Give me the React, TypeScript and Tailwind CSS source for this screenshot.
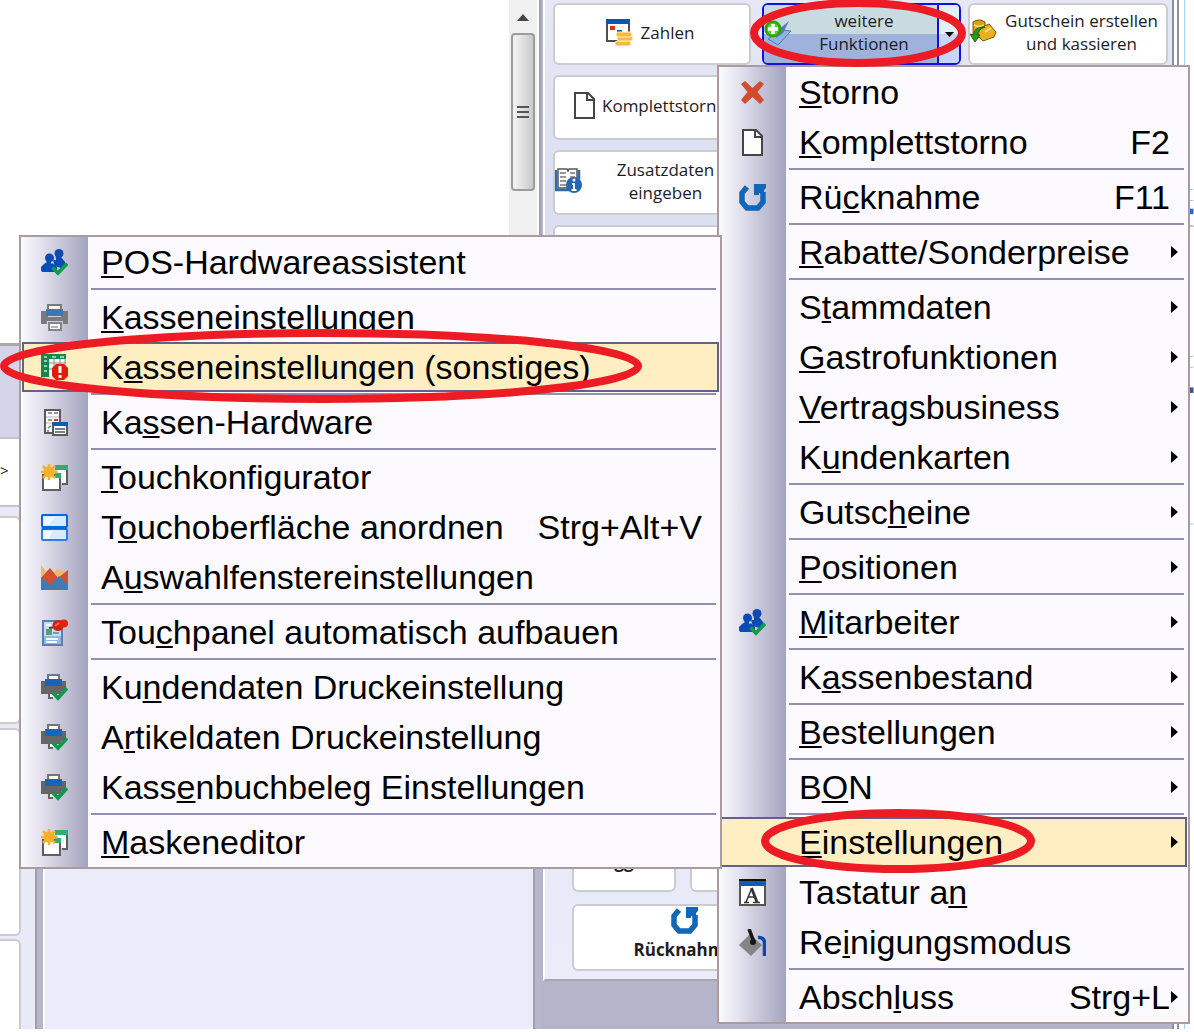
import React from 'react';

type IconName =
  | 'cross'
  | 'page'
  | 'undo'
  | 'people'
  | 'printer'
  | 'table'
  | 'hardware'
  | 'newWindow'
  | 'split'
  | 'chart'
  | 'pinned'
  | 'printerCheck'
  | 'keyboard'
  | 'bucket'
  | 'pay'
  | 'book'
  | 'more'
  | 'coins';

interface MenuEntry {
  // the character after & is underlined
  label: string;
  icon?: IconName;
  shortcut?: string;
  submenu?: boolean;
  active?: boolean;
}

const MAIN_MENU: MenuEntry[][] = [
  [
    { label: '&Storno', icon: 'cross' },
    { label: '&Komplettstorno', icon: 'page', shortcut: 'F2' },
  ],
  [{ label: 'Rü&cknahme', icon: 'undo', shortcut: 'F11' }],
  [{ label: '&Rabatte/Sonderpreise', submenu: true }],
  [
    { label: 'S&tammdaten', submenu: true },
    { label: '&Gastrofunktionen', submenu: true },
    { label: '&Vertragsbusiness', submenu: true },
    { label: 'K&undenkarten', submenu: true },
  ],
  [{ label: 'Gutsc&heine', submenu: true }],
  [{ label: '&Positionen', submenu: true }],
  [{ label: '&Mitarbeiter', icon: 'people', submenu: true }],
  [{ label: 'K&assenbestand', submenu: true }],
  [{ label: '&Bestellungen', submenu: true }],
  [{ label: 'B&ON', submenu: true }],
  [
    { label: '&Einstellungen', submenu: true, active: true },
    { label: 'Tastatur a&n', icon: 'keyboard' },
    { label: 'Re&inigungsmodus', icon: 'bucket' },
  ],
  [{ label: 'Absch&luss', shortcut: 'Strg+L', submenu: true }],
];

const SETTINGS_MENU: MenuEntry[][] = [
  [{ label: '&POS-Hardwareassistent', icon: 'people' }],
  [
    { label: '&Kasseneinstellungen', icon: 'printer' },
    { label: 'K&asseneinstellungen (sonstiges)', icon: 'table', active: true },
  ],
  [{ label: 'Ka&ssen-Hardware', icon: 'hardware' }],
  [
    { label: '&Touchkonfigurator', icon: 'newWindow' },
    { label: 'T&ouchoberfläche anordnen', icon: 'split', shortcut: 'Strg+Alt+V' },
    { label: 'A&uswahlfenstereinstellungen', icon: 'chart' },
  ],
  [{ label: 'Tou&chpanel automatisch aufbauen', icon: 'pinned' }],
  [
    { label: 'Ku&ndendaten Druckeinstellung', icon: 'printerCheck' },
    { label: 'A&rtikeldaten Druckeinstellung', icon: 'printerCheck' },
    { label: 'Kass&enbuchbeleg Einstellungen', icon: 'printerCheck' },
  ],
  [{ label: '&Maskeneditor', icon: 'newWindow' }],
];

const ICONS: Record<IconName, React.ReactNode> = {
  cross: <path d="M2 5 L6 2 L13.500 9 L21 2 L25 5 L18.500 13 L25 21 L21 25 L13.500 18 L6 25 L2 21 L8.500 13 Z" fill="#d24b30" />,
  page: (
    <>
      <path d="M4 1 H17 L23 7 V26 H4 Z" fill="#fdfdfd" stroke="#454545" strokeWidth="2" />
      <path d="M16 1 V8 H23" fill="none" stroke="#454545" strokeWidth="2" />
    </>
  ),
  undo: (
    <>
      <path d="M8 3 L3 9 V18 L8 24 H19 L24 18 V8" fill="none" stroke="#1266b8" strokeWidth="5.500" />
      <path d="M15 0 H27 V4 L25 6 V10 L20 9 V11 H15 Z" fill="#1266b8" />
    </>
  ),
  people: (
    <>
      <g fill="#0a4bb5">
        <circle cx="18" cy="4.500" r="4.500" />
        <path d="M15 8 H20 L24 13 V17 L20 19 L14 17 L12 12 Z" />
        <circle cx="8.500" cy="9" r="4.500" />
        <path d="M6 13 H11 L16 18 V23 H1 L0 21 V18 L3 15 Z" />
      </g>
      <path d="M10 13.500 H12.500 M13 10 H15" stroke="#c0d2ee" strokeWidth="2" />
      <path d="M11.500 18.500 L17 24 L26 14.500" fill="none" stroke="#0f9b4e" strokeWidth="3.800" />
    </>
  ),
  printer: (
    <>
      <path d="M0 7 H4 V13 H23 V7 H27 V20 H22 V17 H6 V20 H0 Z M3 7 H7 V13 H3 Z M20 7 H24 V13 H20 Z" fill="#7b7b7b" />
      <path d="M7 1 H20 V8 H7 Z" fill="#f7f7f7" stroke="#7a7a7a" strokeWidth="2" />
      <rect x="5" y="5" width="17" height="7" fill="#3878b8" />
      <path d="M8 19 H20 V26 H8 Z" fill="#fff" stroke="#858585" strokeWidth="2" />
      <path d="M10 23 H17" stroke="#8fbbe0" strokeWidth="2" />
    </>
  ),
  table: (
    <>
      <rect x="1" y="0" width="24" height="23" fill="#f6faf6" />
      <path d="M0 0 H25 V5 H8 V23 H0 Z" fill="#16884f" />
      <path d="M3 7 H6 M3 12 H6 M3 17 H6 M3 3 H6 M11 3 H15 M19 3 H23" stroke="#8fd3ac" strokeWidth="2" />
      <path d="M8 9 H25 M8 15 H25 M13 5 V22 M19 5 V22 M24 5 V12" stroke="#8d8d8d" strokeWidth="1" />
      <path d="M15 10 H23 L27 14 V22 L23 26 H15 L11 22 V14 Z" fill="#e01e0c" />
      <path d="M19 12 V19 M19 21 V24" stroke="#fff" strokeWidth="3" />
    </>
  ),
  hardware: (
    <>
      <path d="M4 1 H19 V24 H4 Z" fill="#fcfcfc" stroke="#5a5a5a" strokeWidth="2" />
      <path d="M7 4 H11 M13 4 H17 M7 11 H11 M7 19 L10 17 M6 22 H8" stroke="#777" strokeWidth="1.500" />
      <path d="M5 8 H18 M5 14 H12" stroke="#b5b5b5" strokeWidth="1" />
      <path d="M13 11 H17" stroke="#d33" strokeWidth="2" />
      <path d="M12 14 H26 V26 H12 Z" fill="#fff" stroke="#5a5a5a" strokeWidth="2" />
      <rect x="11" y="13" width="16" height="4" fill="#0d5cb5" />
      <path d="M14 20 H24 M14 23 H24" stroke="#555" strokeWidth="1.500" />
    </>
  ),
  newWindow: (
    <>
      <path d="M15 3 H26 V20 H21" fill="#fff" stroke="#5f5f5f" strokeWidth="2" />
      <rect x="14" y="1" width="13" height="5" fill="#2fac78" />
      <path d="M2 11 H19 V26 H2 Z" fill="#fff" stroke="#5f5f5f" strokeWidth="2" />
      <rect x="14" y="9" width="6" height="5" fill="#2fac78" />
      <path d="M8 0 V16 M0 8 H16 M2 2 L14 14 M14 2 L2 14" stroke="#f9b02c" strokeWidth="2.600" />
      <circle cx="8" cy="8" r="5.500" fill="#f9b02c" />
    </>
  ),
  split: (
    <>
      <rect x="1" y="1" width="25" height="12" rx="1" fill="#d4ecfd" stroke="#0868d8" strokeWidth="2" />
      <rect x="1" y="15" width="25" height="11" rx="1" fill="#d4ecfd" stroke="#2c7fe0" strokeWidth="2" />
      <path d="M2 3 H14 L8 11 H2 Z M2 17 H12 L8 25 H2 Z" fill="#eff8ff" />
      <path d="M1 14 H26" stroke="#0868d8" strokeWidth="3" />
    </>
  ),
  chart: (
    <>
      <path d="M0 1 L5 7 L9 5 L13 8 L18 5 L22 8 L27 6 V18 H0 Z" fill="#edb868" />
      <path d="M0 14 L9 4 L17 14 L27 6 V22 H0 Z" fill="#d04e32" />
      <path d="M0 13 L9 21 L18 12 L27 21 V26 H0 Z" fill="#3f7cb5" />
    </>
  ),
  pinned: (
    <>
      <path d="M2 2 H21 V26 H2 Z" fill="#c3def3" stroke="#5f7da8" strokeWidth="2" />
      <path d="M3 17 H20 V25 H3 Z" fill="#85bdea" />
      <path d="M5 6 H10 M5 20 H17 M5 23 H16" stroke="#f8fcff" strokeWidth="2" />
      <rect x="5" y="10" width="6" height="6" fill="#5b9b78" />
      <path d="M12 14 H18" stroke="#8398b0" strokeWidth="2" />
      <path d="M8 9 L15 8" stroke="#444" strokeWidth="2" />
      <circle cx="17" cy="6.500" r="5.500" fill="#d5200c" />
      <circle cx="23" cy="4.500" r="4" fill="#e8210e" />
      <path d="M14 7 L18 4" stroke="#ff6b4d" strokeWidth="2" />
    </>
  ),
  printerCheck: (
    <>
      <path d="M0 7 H5 V12 H21 V7 H25 V17 H20 V20 H12 V25 H7 V20 H0 Z" fill="#666" />
      <path d="M7 1 H18 V8 H7 Z" fill="#fff" stroke="#757575" strokeWidth="2" />
      <path d="M4 5 H21 V12 H4 Z" fill="#1566b8" />
      <path d="M9 20 H13 V23 H9 Z" fill="#fff" />
      <path d="M11.500 18.500 L17 24 L26 14" fill="none" stroke="#0d984c" strokeWidth="3.800" />
    </>
  ),
  keyboard: (
    <>
      <rect x="1" y="1" width="25" height="25" fill="#fdfdfd" stroke="#555" strokeWidth="2" />
      <rect x="1" y="1" width="25" height="6" fill="#0e5cb4" />
      <path d="M0 1 H27" stroke="#111" strokeWidth="2" />
      <path d="M7 23 L12.500 10 M9 18 H16 M5 23.500 H10 M14 23.500 H21" fill="none" stroke="#333" strokeWidth="1.500" />
      <path d="M12.500 9 L18 23" stroke="#333" strokeWidth="2.800" />
    </>
  ),
  bucket: (
    <>
      <path d="M0 16 L11 5 L23 16 L12 27 Z" fill="#858585" />
      <path d="M10 0 L15 13" stroke="#161616" strokeWidth="3.500" />
      <circle cx="14" cy="13" r="3" fill="#161616" />
      <path d="M19 8.500 C24 8 25.500 11 25.500 14 V27" fill="none" stroke="#0b49a8" strokeWidth="3.500" />
    </>
  ),
  pay: (
    <>
      <path d="M1 3 H23 V22 H1 Z" fill="#fff" stroke="#4f4f4f" strokeWidth="2" />
      <rect x="0" y="0" width="24" height="5" fill="#0a58ae" />
      <rect x="4" y="7" width="5" height="4" fill="#e22a14" />
      <rect x="11" y="11" width="5" height="3" fill="#1c5ca8" />
      <g fill="#fab93e" stroke="#fff1cd" strokeWidth="1">
        <rect x="9" y="22" width="16" height="5" rx="2.500" />
        <rect x="11" y="17" width="16" height="5" rx="2.500" />
        <rect x="10" y="13" width="16" height="5" rx="2.500" />
      </g>
    </>
  ),
  book: (
    <>
      <path d="M1 3 V23 H14 M24 3 V12" fill="none" stroke="#2c6cae" strokeWidth="2.500" />
      <path d="M3 2 H12 L13 4 L14 2 H22 V21 H3 Z" fill="#fff" stroke="#555" strokeWidth="1.500" />
      <path d="M5 6 H11 M5 10 H11 M5 14 H11 M5 18 H11 M15 6 H20 M15 10 H20" stroke="#777" strokeWidth="1.500" />
      <circle cx="19" cy="18" r="8" fill="#2468b4" />
      <path d="M19 16 V23 M16.500 23 H21.500 M17 17 H19" stroke="#fff" strokeWidth="2" />
      <circle cx="19" cy="13" r="1.500" fill="#fff" />
    </>
  ),
  more: (
    <>
      <path d="M4 20 L18 11 L27 12 L14 26 Z" fill="#8fb4e4" stroke="#4c78b8" strokeWidth="1" />
      <path d="M12 13 L25 2 L19 14 L12 19 Z" fill="#5577b4" />
      <circle cx="9" cy="10" r="8.500" fill="#2fa30c" />
      <circle cx="9" cy="10" r="6" fill="#5ad02c" />
      <path d="M9 5 V15 M4 10 H14" stroke="#fff" strokeWidth="3.500" />
    </>
  ),
  coins: (
    <>
      <path d="M3 3 Q9 -1 15 3 V18 H3 Z" fill="#dda016" stroke="#7c5606" strokeWidth="1" />
      <path d="M4 6 Q9 9 14 6" fill="none" stroke="#fbdc6a" strokeWidth="2" />
      <path d="M10 9 L19 5 L26 13 L24 18 L13 22 L8 17 Z" fill="#eab021" stroke="#7c5606" strokeWidth="1" />
      <path d="M15 13 L21 9" stroke="#fbe078" strokeWidth="2" />
      <path d="M15 8 Q3 8 4 16 L0 15 L5 23 L10 16 L7 16 Q7 11 15 8 Z" fill="#259c1c" stroke="#14680e" strokeWidth="1" />
    </>
  ),
};

const Icon: React.FC<{ name: IconName; className?: string }> = ({ name, className = '' }) => (
  <svg viewBox="0 0 27 27" className={`size-[27px] shrink-0 ${className}`} aria-hidden="true">
    {ICONS[name]}
  </svg>
);

const Mnemonic: React.FC<{ text: string }> = ({ text }) => {
  const [before, rest] = text.split('&');
  return (
    <>
      {before}
      <span className="underline decoration-2 underline-offset-2 [text-decoration-skip-ink:none]">{rest[0]}</span>
      {rest.slice(1)}
    </>
  );
};

const MenuRow: React.FC<{ entry: MenuEntry }> = ({ entry }) => (
  <button
    type="button"
    role="menuitem"
    aria-haspopup={entry.submenu ? 'menu' : undefined}
    className={`flex h-[50px] items-center border-2 pl-[17px] text-left ${
      entry.active ? 'border-[#62618a] bg-[#ffeec2]' : 'border-transparent'
    }`}
  >
    <span className="mr-[33px] flex size-[27px] shrink-0">{entry.icon && <Icon name={entry.icon} />}</span>
    <span className="flex-1 whitespace-nowrap">
      <Mnemonic text={entry.label} />
    </span>
    {entry.shortcut && <span className="whitespace-nowrap">{entry.shortcut}</span>}
    <span className="w-[15px] shrink-0 pl-px">
      {entry.submenu && (
        <svg viewBox="0 0 7 12" className="h-3 w-[7px]" aria-hidden="true">
          <path d="M0 0 L7 6 L0 12 Z" fill="#000" />
        </svg>
      )}
    </span>
  </button>
);

const Menu: React.FC<{ groups: MenuEntry[][]; label: string; className: string }> = ({ groups, label, className }) => (
  <div
    role="menu"
    aria-label={label}
    className={`absolute border-2 border-[#ab9b9e] bg-[#fcfaff] bg-[linear-gradient(to_right,#fafaff,#e3e2ee_30%,#a4a3be)] bg-[length:67px_100%] bg-no-repeat font-['Liberation_Sans',Arial,sans-serif] text-[34px] leading-[38px] text-black ${className}`}
  >
    {groups.map((group, i) => (
      <div key={i} className="ml-px mr-px flex flex-col">
        {i > 0 && <div role="separator" className="my-px ml-[69px] mr-[3px] h-[3px] border-t-2 border-[#9190b0]" />}
        {group.map(entry => (
          <MenuRow key={entry.label} entry={entry} />
        ))}
      </div>
    ))}
  </div>
);

const TILE = 'flex items-center rounded-md border-2 border-[#cbcbd0] bg-white text-[17px] leading-[23px]';

const Ring: React.FC<{ className: string; rx: number; ry: number }> = ({ className, rx, ry }) => (
  <svg
    className={`pointer-events-none absolute ${className}`}
    width={rx * 2 + 8}
    height={ry * 2 + 8}
    aria-hidden="true"
  >
    <ellipse cx={rx + 4} cy={ry + 4} rx={rx} ry={ry} fill="none" stroke="#ed1c24" strokeWidth="8" />
  </svg>
);

const ReceiptArea: React.FC = () => (
  <div className="flex w-[541px] shrink-0 flex-col">
    <div className="flex h-[343px] border-r-2 border-[#a0a0a8] bg-white">
      <div className="flex-1" />
      <div className="flex w-[28px] flex-col items-center bg-[#f0f0f0] pt-[14px]">
        <svg viewBox="0 0 12 7" className="h-[7px] w-3" aria-hidden="true">
          <path d="M0 7 L6 0 L12 7 Z" fill="#444" />
        </svg>
        <div className="mt-3 flex h-[158px] w-6 flex-col items-center justify-center gap-[3px] rounded-sm border-2 border-[#9c9c9c] bg-linear-to-r from-[#f5f5f5] to-[#cacaca]">
          <span className="h-[2px] w-3 bg-[#555]" />
          <span className="h-[2px] w-3 bg-[#555]" />
          <span className="h-[2px] w-3 bg-[#555]" />
        </div>
      </div>
      <div className="w-[2px]" />
    </div>
    <div className="flex flex-1 border-t-[3px] border-[#a9a9ad] bg-[#b7b6cd]">
      <div className="flex w-[37px] flex-col border-r-2 border-[#a0a0a4] bg-[#e8eaf8]">
        <div className="h-[91px] bg-[#d4d5e8]" />
        <div className="h-[70px] border-y-2 border-[#c4c4c8] bg-white pt-5 text-[15px]">&gt;</div>
        <div className="mr-[14px] mt-[9px] h-[208px] rounded-r-md border-2 border-l-0 border-[#cbcbd0] bg-white" />
        <div className="mr-[14px] mt-[4px] h-[208px] rounded-r-md border-2 border-l-0 border-[#cbcbd0] bg-white" />
        <div className="mr-[14px] mt-[3px] flex-1 rounded-tr-md border-2 border-b-0 border-l-0 border-[#cbcbd0] bg-white" />
      </div>
      <div className="ml-[6px] mr-[6px] flex-1 border-l-2 border-r-2 border-l-white border-r-[#a0a0a4] bg-[#eaecfa]" />
    </div>
  </div>
);

const FunctionPanel: React.FC = () => (
  <div className="flex flex-1 flex-col bg-[#b5b4cb] pb-12">
    <div className="flex flex-1 flex-col justify-between border-b-2 border-l-2 border-b-[#a8a8ac] border-l-white bg-linear-to-b from-[#e6e8f7] via-[#dcdff0] via-20% to-[#eaecfa]">
      <div className="flex flex-col pl-[8px] pr-[4px] pt-[3px]">
        <div className="flex h-[62px]">
          <button type="button" className={`${TILE} w-[198px] justify-center pb-1 pr-1`}>
            <Icon name="pay" className="mr-2" />
            Zahlen
          </button>
          <div className="ml-[11px] flex flex-1 overflow-hidden rounded-md border-2 border-[#1212e0]">
            <button
              type="button"
              className="flex flex-1 items-center bg-linear-to-b from-[#c9dbe0] from-50% to-[#9fb2dc] to-50% pb-1 text-[17px] leading-[23px]"
            >
              <Icon name="more" />
              <span className="flex-1 text-center">
                weitere
                <br />
                Funktionen
              </span>
            </button>
            <button
              type="button"
              aria-label="Menü öffnen"
              className="flex w-[22px] items-center justify-center border-l-2 border-[#1212e0] bg-linear-to-b from-[#e2f0f8] from-50% to-[#c5d6f8] to-50%"
            >
              <svg viewBox="0 0 9 5" className="h-[5px] w-[9px]" aria-hidden="true">
                <path d="M0 0 H9 L4.500 5 Z" fill="#000" />
              </svg>
            </button>
          </div>
          <button type="button" className={`${TILE} ml-[7px] w-[200px] pb-1`}>
            <Icon name="coins" />
            <span className="flex-1 text-center">
              Gutschein erstellen
              <br />
              und kassieren
            </span>
          </button>
        </div>
        <div className="flex w-[198px] flex-col gap-[10px] pt-[10px]">
          <button type="button" className={`${TILE} h-[65px] pb-1 pl-4`}>
            <Icon name="page" className="mr-1" />
            Komplettstorno
          </button>
          <button type="button" className={`${TILE} h-[65px] pb-1`}>
            <Icon name="book" />
            <span className="flex-1 text-center">
              Zusatzdaten
              <br />
              eingeben
            </span>
          </button>
          <div className={`${TILE} h-[65px]`} />
        </div>
      </div>
      <div className="flex flex-col gap-[12px] pb-2 pl-[27px]">
        <div className="flex gap-[14px]">
          <button type="button" className={`${TILE} h-[65px] w-[104px] items-end justify-center pb-[17px] font-bold`}>
            gg
          </button>
          <button type="button" aria-label="Weitere Taste" className={`${TILE} h-[65px] w-[104px]`} />
        </div>
        <button type="button" className={`${TILE} h-[67px] w-[224px] flex-col pt-px font-bold`}>
          <Icon name="undo" className="mb-1" />
          Rücknahme
        </button>
      </div>
    </div>
  </div>
);

const App: React.FC = () => (
  <div className="relative flex min-h-screen overflow-hidden bg-white pb-[3px] font-['Open_Sans','Noto_Sans',sans-serif] text-[#1c1c24]">
    <ReceiptArea />
    <div className="w-[2px] bg-[#b5b4cb]" />
    <FunctionPanel />
    <div className="flex w-[22px] gap-[3px]">
      <div className="w-[2px] bg-[#909094]" />
      <div className="w-[2px] bg-[#909094]" />
      <div className="ml-[2px] w-[2px] bg-[#9fd4ee]" />
      <svg viewBox="0 0 6 400" className="mt-[170px] h-[400px] w-[6px]" aria-hidden="true">
        <path d="M0 3 H6 M0 15 H6 M0 185 H6 M0 197 H6 M0 368 H6" stroke="#8cc8e8" strokeWidth="1" />
        <path d="M0 27 H6" stroke="#2a6cc0" strokeWidth="6" />
        <path d="M0 43 H6" stroke="#777" strokeWidth="1" />
        <path d="M0 222 H6" stroke="#3a5490" strokeWidth="6" />
      </svg>
    </div>

    <Menu groups={MAIN_MENU} label="weitere Funktionen" className="left-[717px] top-[65px] w-[473px]" />
    <Menu groups={SETTINGS_MENU} label="Einstellungen" className="left-[19px] top-[235px] w-[703px]" />

    <Ring className="left-[750px] top-[-1px]" rx={104} ry={30} />
    <Ring className="left-0 top-[329px]" rx={317} ry={33} />
    <Ring className="left-[761px] top-[809px]" rx={133} ry={28} />
  </div>
);

export default App;
